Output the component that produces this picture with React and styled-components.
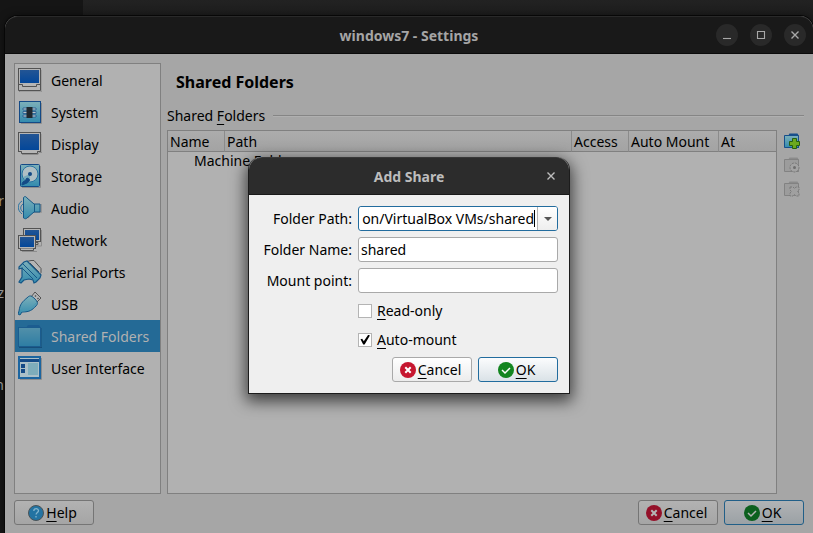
import React, { useEffect, useRef } from "react";
import styled, { createGlobalStyle, css } from "styled-components";

const GlobalStyle = createGlobalStyle`
  *, *::before, *::after { box-sizing: border-box; }
  body { margin: 0; background: #1f1f1f; }
  body, button, input { font: 14px/20px "Noto Sans", "Open Sans", sans-serif; color: #000; }
  button, input { margin: 0; padding: 0; }
`;

const Desktop = styled.div`
  position: relative;
  min-height: 100vh;
  display: flex;
  flex-direction: column;
  overflow: hidden;
  padding: 16px 0 0 5px;
  background: linear-gradient(#222 0, #1d1d1d 16px);
`;

const Terminal = styled.div`
  position: absolute;
  inset: 0 auto 0 0;
  width: 83px;
  background: #151515;
`;

const Glyph = styled.span`
  position: absolute;
  top: ${(p) => p.$top}px;
  left: 0;
  width: 4px;
  display: flex;
  justify-content: flex-end;
  overflow: hidden;
  color: ${(p) => p.$color};
`;

const Window = styled.main`
  position: relative;
  flex: 1;
  display: flex;
  flex-direction: column;
  border-radius: 13px 13px 0 0;
  background: #a6a6a6;
  box-shadow: 0 0 0 1px #070707, 0 0 8px #0008;
`;

const TitleBar = styled.header`
  display: grid;
  grid-template-columns: 1fr auto 1fr;
  align-items: center;
  height: 38px;
  padding: 0 7px;
  font-weight: 700;
  border-radius: 13px 13px 0 0;
  ${(p) =>
    p.$active
      ? css`background: #2c2c2c; color: #bdbdbd; border-bottom: 1px solid #191919; border-top: 1px solid #383838;`
      : css`background: #191919; color: #a5a5a5; border-bottom: 1px solid #0b0b0b; border-top: 1px solid #292929;`}
`;

const Title = styled.h1`
  grid-column: 2;
  margin: 0;
  padding-top: 2px;
  font: inherit;
`;

const WindowControls = styled.div`
  justify-self: end;
  display: flex;
  gap: 12px;
`;

const ControlButton = styled.button`
  display: grid;
  place-items: center;
  width: 22px;
  height: 22px;
  border: 0;
  border-radius: 50%;
  background: ${(p) => (p.$plain ? "transparent" : "#292929")};
  color: ${(p) => (p.$plain ? "#bdbdbd" : "#a8a8a8")};
`;

const Body = styled.div`
  flex: 1;
  display: grid;
  grid-template-columns: 147px minmax(0, 1fr);
  grid-template-rows: 1fr auto;
  gap: 6px;
  padding: 9px 9px 8px;
`;

const Categories = styled.nav`
  border: 1px solid #808080;
  background: #b1b1b1;
`;

const Category = styled.a`
  display: flex;
  align-items: center;
  gap: 9px;
  height: 32px;
  padding-left: 3px;
  white-space: nowrap;
  text-decoration: none;
  color: ${(p) => (p.$selected ? "#b1b1b1" : "#000")};
  background: ${(p) => (p.$selected ? "#246a96" : "transparent")};
`;

const CategoryName = styled.span`
  padding-top: 2px;
`;

const Page = styled.section`
  display: flex;
  flex-direction: column;
`;

const Heading = styled.h2`
  margin: 6px 0 0 9px;
  font-size: 16px;
  line-height: 26px;
`;

const GroupTitle = styled.div`
  display: flex;
  align-items: center;
  gap: 8px;
  margin: 11px 0 4px;

  &::after {
    content: "";
    flex: 1;
    height: 2px;
    background: #858585;
    border-bottom: 1px solid #b0b0b0;
  }
`;

const Content = styled.div`
  flex: 1;
  display: flex;
  gap: 7px;
`;

const TableFrame = styled.div`
  flex: 1;
  border: 1px solid #808080;
  background: #b1b1b1;
`;

const Table = styled.table`
  width: 100%;
  table-layout: fixed;
  border-collapse: separate;
  border-spacing: 0;
  white-space: nowrap;

  th {
    height: 21px;
    padding: 1px 0 0 2px;
    line-height: 19px;
    text-align: left;
    font-weight: 400;
    background: linear-gradient(#acacac, #a3a3a3);
    border-bottom: 1px solid #808080;
    border-right: 1px solid #8b8b8b;
  }
  th:last-child { border-right: 0; }
  td { height: 18px; padding: 0 0 0 26px; line-height: 18px; }
`;

const Col = styled.col`
  width: ${(p) => p.$width};
`;

const Tools = styled.div`
  display: flex;
  flex-direction: column;
  gap: 8px;
  width: 20px;
  padding-top: 3px;
`;

const ToolButton = styled.button`
  width: 16px;
  height: 16px;
  border: 0;
  background: none;
`;

const Footer = styled.footer`
  grid-column: 1 / -1;
  display: flex;
  gap: 6px;
`;

const Spacer = styled.span`
  flex: 1;
`;

const faces = {
  dim: css`border-color: #757575; background: linear-gradient(#b2b2b2, #a5a5a5);`,
  dimDefault: css`border-color: #215f88; background: linear-gradient(#b1b3b5, #9ba1a5);`,
  light: css`border-color: #a9a9a9; background: linear-gradient(#fff, #ececec);`,
  lightDefault: css`border-color: #226c9e; background: linear-gradient(#fbfcfd, #dae2e7);`,
};

const PushButton = styled.button`
  display: flex;
  align-items: center;
  justify-content: center;
  gap: 2px;
  width: 80px;
  height: 25px;
  padding-right: 3px;
  border: 1px solid;
  border-radius: 3px;
  ${(p) => faces[p.$face]}
`;

const Mnemonic = styled.span`
  text-decoration: underline;
  text-decoration-thickness: 1px;
  text-underline-offset: 3px;
  text-decoration-skip-ink: none;
`;

const Dialog = styled.section`
  position: absolute;
  top: 141px;
  left: 50%;
  transform: translateX(-50%);
  width: 322px;
  border: 1px solid #1c1c1c;
  border-top: 0;
  border-radius: 13px 13px 0 0;
  background: #efefef;
  box-shadow: 0 5px 16px 2px #000a;
`;

const Form = styled.form`
  display: grid;
  grid-template-columns: 1fr 200px;
  gap: 6px;
  padding: 11px;
`;

const FieldLabel = styled.label`
  line-height: 25px;
  text-align: right;
  white-space: nowrap;
`;

const TextBox = styled.input`
  width: 100%;
  height: 25px;
  padding: 0 2px;
  border: 1px solid #a9a9a9;
  border-radius: 3px;
  background: #fff;
  outline: 0;
`;

const Combo = styled.div`
  display: flex;
  align-items: center;
  height: 25px;
  overflow: hidden;
  border: 1px solid #226c9e;
  border-radius: 3px;
  background: #fff;
`;

const ComboInput = styled.input`
  flex: 1;
  min-width: 0;
  height: 23px;
  margin-left: 1px;
  border: 0;
  background: #fff;
  text-align: right;
  outline: 0;
`;

const Caret = styled.span`
  width: 1px;
  height: 17px;
  margin-right: 2px;
  background: #000;
`;

const ComboArrow = styled.button`
  display: grid;
  place-items: center;
  width: 20px;
  height: 23px;
  border: 0;
  border-left: 1px solid #b4b4b4;
  background: linear-gradient(#fff, #eee);
`;

const CheckRow = styled.label`
  grid-column: 2;
  display: flex;
  align-items: center;
  gap: 5px;
  height: 23px;
`;

const CheckBox = styled.input`
  appearance: none;
  display: grid;
  place-items: center;
  width: 14px;
  height: 14px;
  border: 1px solid #b4b4b4;
  background: #fff;

  &:checked::after {
    content: "";
    width: 10px;
    height: 10px;
    background: #000;
    clip-path: polygon(5% 48%, 22% 42%, 38% 67%, 82% 2%, 99% 10%, 46% 99%, 32% 99%);
  }
`;

const Actions = styled.div`
  grid-column: 1 / -1;
  display: flex;
  justify-content: flex-end;
  gap: 6px;
`;

const Svg = styled.svg`
  display: block;
  flex: none;
`;

const B = "#144a86";
const D = "#535353";
const T = "url(#teal)";

const Defs = () => (
  <Svg width="0" height="0" aria-hidden="true">
    <defs>
      <linearGradient id="teal" x1="0" y1="0" x2="0" y2="1">
        <stop offset="0" stopColor="#7db0b9" /><stop offset="1" stopColor="#338bae" />
      </linearGradient>
      <linearGradient id="screen" x1="0" y1="0" x2="0" y2="1">
        <stop offset="0" stopColor="#235594" /><stop offset="1" stopColor="#03479a" />
      </linearGradient>
    </defs>
  </Svg>
);

const Screen = ({ x, y, w, h }) => (
  <>
    <rect x={x + 0.5} y={y + 0.5} width={w - 1} height={h - 1} fill="#b5b5b5" stroke={D} />
    <rect x={x + 2} y={y + 2} width={w - 4} height={h - 4} fill="url(#screen)" />
  </>
);

const drawings = {
  general: (
    <>
      <path d="M1.5 17v7h22.500V2" fill="none" stroke="#888" />
      <path d="M.5 16.500h22v6H.500z" fill="#b5b5b5" stroke={D} />
      <Screen x={0} y={0} w={23} h={17} />
      <path d="M1 16h21v1h-3v2H5v-2H1z" fill="#b5b5b5" />
      <path d="M1 16.500h3.500v2h14v-2H22" fill="none" stroke={D} />
    </>
  ),
  system: (
    <>
      <path d="M3 23.500h20.500V3" fill="none" stroke="#8d8d8d" />
      <rect x="1.500" y="1.500" width="21" height="21" fill={T} stroke={B} />
      <path d="M5 8h13v2H5zm0 3.500h13v2H5zM5 15h13v2H5z" fill="#b8c7ca" stroke={B} strokeWidth=".7" />
      <rect x="8.500" y="7" width="6" height="11" fill="#20292f" />
    </>
  ),
  display: (
    <>
      <path d="M4 22.500h16l1-2h3V2" fill="none" stroke="#8d8d8d" />
      <Screen x={0} y={0} w={23} h={20} />
      <path d="M1 18.500h21v1h-2.500v2h-16v-2H1z" fill="#b5b5b5" />
      <path d="M.5 19.500h3v2h16v-2h3" fill="none" stroke={D} />
    </>
  ),
  storage: (
    <>
      <path d="M4 23.500h18.500V2" fill="none" stroke="#8d8d8d" />
      <rect x="2.500" y=".5" width="19" height="22" rx="1" fill={T} stroke={B} />
      <circle cx="12" cy="10" r="8" fill="#afbfc4" stroke="#2672a2" />
      <path d="M12 18a8 8 0 0 1-7-5l7-3z" fill="#75a9ba" />
      <circle cx="12" cy="10" r="2" fill={B} />
      <path d="M9 14l2 1c1 1 0 3-2 4l-5 2c0-2 1-4 3-4z" fill={B} stroke={B} />
    </>
  ),
  audio: (
    <>
      <path d="M10 22l3-6h10V8" fill="none" stroke="#8d8d8d" strokeWidth="1.500" />
      <path d="M5.500 1.500C7 0 8 .5 9 2l7 6h6v8h-6l-7 6c-1 1-2 1-3.500 0z" fill={T} stroke="#155787" />
      <path d="M16.500 8v8" stroke="#155787" />
      <path d="M4 5C-1 8-1 14 4 18M5 8c-3 2-3 6 0 8" fill="none" stroke="#2672a2" />
    </>
  ),
  network: (
    <>
      <path d="M17 18h6.500V2M4 23.500h15" fill="none" stroke="#8d8d8d" />
      <Screen x={5} y={0} w={18} h={14} />
      <path d="M15 14.500h5v2h-5z" fill="#b5b5b5" stroke={D} />
      <Screen x={0} y={7} w={18} h={14} />
      <path d="M2.500 20.500v2h13v-2" fill="#b5b5b5" stroke={D} />
    </>
  ),
  serial: (
    <>
      <path d="M9 1.500l4-1h3l7 8v4l-4 4z" fill="#b5b5b5" stroke={D} />
      <path d="M12 3l9 9" stroke={D} fill="none" />
      <path d="M4 8l-3 1v-2l5-5 3-1 14 14-1 3-4 4-2 1-1-3-4-1-5 1-3 3-2-1 3-5z" fill={T} stroke="#155787" strokeWidth="1.200" />
      <path d="M5 4l14 14M4 8l11 11" fill="none" stroke="#155787" />
    </>
  ),
  usb: (
    <>
      <path d="M13 5l4-5 6 6-5 5z" fill="#b5b5b5" stroke={D} />
      <path d="M17 3.500l1 1M19.500 6l1 1" stroke={D} strokeWidth="1.500" />
      <path d="M10 5c2-2 4-1 7 2s3 5 1 7c-4 4-6 6-14 6l-2 3-2-1 1-3c1-7 3-9 9-14z" fill={T} stroke="#155787" />
      <path d="M4 19c7 0 10-3 14-8" fill="none" stroke="#4c98b3" />
    </>
  ),
  folder: (
    <>
      <path d="M1 23.500h23V4" fill="none" stroke="#174e79" />
      <path d="M8 4l2-3h11l2 3v4H8z" fill="#1c5c90" />
      <rect x=".5" y="3.500" width="22" height="19" fill="url(#teal)" stroke="#1b5c8e" />
      <rect x="1" y="4" width="21" height="18" fill="#276f9a" opacity=".5" />
    </>
  ),
  ui: (
    <>
      <path d="M2 23.500h21.500V2" fill="none" stroke="#8d8d8d" />
      <rect x="1" y="1" width="21" height="21" fill="#abc0c7" stroke="#1c65a0" strokeWidth="2" />
      <path d="M2 3h19v3H2z" fill={B} />
      <path d="M3 8h4v4H3zM3 13h4v4H3z" fill={B} />
      <path d="M10 7h10v12H10z" fill="#7eadbb" />
    </>
  ),
};

const CategoryIcon = ({ name }) => (
  <Svg width="24" height="24" viewBox="0 0 24 24" aria-hidden="true">{drawings[name]}</Svg>
);

const FolderTool = ({ kind }) => {
  const add = kind === "add";
  const ink = add ? "#174f8b" : "#828282";
  return (
    <Svg width="16" height="16" viewBox="0 0 16 16" aria-hidden="true">
      <path d="M4 3l1.500-2.500h8L15 3v12H4z" fill={add ? "#174f8b" : "#8b8b8b"} />
      <path d="M.5 2.500h14v12H.500z" fill={add ? T : "#9c9c9c"} stroke={ink} />
      {kind === "add" && <path d="M8.500 5.500h4v3h3v4h-3v3h-4v-3h-3v-4h3z" fill="#6ca920" stroke="#275f10" />}
      {kind === "edit" && (
        <>
          <circle cx="10.500" cy="10.500" r="4.500" fill="#a3a3a3" stroke="#787878" strokeDasharray="2 1" />
          <circle cx="10.500" cy="10.500" r="1.500" fill="#6e6e6e" />
        </>
      )}
      {kind === "remove" && (
        <path d="M6 6h3l1.500 1.500L12 6h3v3l-1.500 1.500L15 12v3h-3l-1.500-1.500L9 15H6v-3l1.500-1.500L6 9z" fill="#a0a0a0" stroke="#797979" strokeDasharray="2 1" />
      )}
    </Svg>
  );
};

const ButtonIcon = ({ kind, dim }) => (
  <Svg width="16" height="16" viewBox="0 0 16 16" aria-hidden="true">
    {kind === "cancel" && (
      <>
        <circle cx="8" cy="8" r="8" fill={dim ? "#94112a" : "#c6162f"} />
        <path d="M5.300 5.300l5.400 5.400M10.700 5.300l-5.400 5.400" stroke={dim ? "#b5b5b5" : "#fff"} strokeWidth="2" />
      </>
    )}
    {kind === "ok" && (
      <>
        <circle cx="8" cy="8" r="8" fill={dim ? "#0c601e" : "#12851f"} />
        <path d="M4 8l3 3 5-5" fill="none" stroke={dim ? "#b5b5b5" : "#fff"} strokeWidth="1.500" />
      </>
    )}
    {kind === "help" && (
      <>
        <circle cx="8" cy="8" r="7.500" fill="#2373a2" stroke="#4a5357" />
        <path d="M5.800 6c0-3 4.700-3 4.700-.3 0 1.800-2.400 1.800-2.400 3.800M8 11v1.500" fill="none" stroke="#83b4cd" strokeWidth="1.300" />
      </>
    )}
  </Svg>
);

const Action = ({ kind, face, children, ...rest }) => (
  <PushButton type="button" $face={face} {...rest}>
    <ButtonIcon kind={kind} dim={face.startsWith("dim")} />
    <span><Mnemonic>{children[0]}</Mnemonic>{children.slice(1)}</span>
  </PushButton>
);

const controlPaths = {
  Minimize: "M0 7.500h8",
  Maximize: "M.5.500h7v7h-7z",
  Close: "M.5.500l7 7M7.500.500l-7 7",
};

const Control = ({ label, plain }) => (
  <ControlButton type="button" aria-label={label} $plain={plain}>
    <Svg width="8" height="8" viewBox="0 0 8 8" overflow="visible" aria-hidden="true">
      <path d={controlPaths[label]} fill="none" stroke="currentColor" strokeWidth={label === "Close" ? 1.4 : 1.1} />
    </Svg>
  </ControlButton>
);

const categories = [
  ["general", "General"], ["system", "System"], ["display", "Display"],
  ["storage", "Storage"], ["audio", "Audio"], ["network", "Network"],
  ["serial", "Serial Ports"], ["usb", "USB"], ["folder", "Shared Folders"],
  ["ui", "User Interface"],
];

function AddShare() {
  const pathRef = useRef(null);
  useEffect(() => {
    pathRef.current.scrollLeft = pathRef.current.scrollWidth;
  }, []);

  return (
    <Dialog role="dialog" aria-labelledby="add-share">
      <TitleBar $active>
        <Title as="h2" id="add-share">Add Share</Title>
        <WindowControls><Control label="Close" plain /></WindowControls>
      </TitleBar>
      <Form>
        <FieldLabel htmlFor="path">Folder Path:</FieldLabel>
        <Combo>
          <ComboInput id="path" ref={pathRef} defaultValue="on/VirtualBox VMs/shared" />
          <Caret />
          <ComboArrow type="button" aria-label="Choose path">
            <Svg width="8" height="4" viewBox="0 0 8 4" aria-hidden="true"><path d="M0 0h8L4 4z" fill="#555" /></Svg>
          </ComboArrow>
        </Combo>
        <FieldLabel htmlFor="name">Folder Name:</FieldLabel>
        <TextBox id="name" defaultValue="shared" />
        <FieldLabel htmlFor="mount">Mount point:</FieldLabel>
        <TextBox id="mount" />
        <CheckRow><CheckBox type="checkbox" /><span><Mnemonic>R</Mnemonic>ead-only</span></CheckRow>
        <CheckRow><CheckBox type="checkbox" defaultChecked /><span><Mnemonic>A</Mnemonic>uto-mount</span></CheckRow>
        <Actions>
          <Action kind="cancel" face="light">Cancel</Action>
          <Action kind="ok" face="lightDefault">OK</Action>
        </Actions>
      </Form>
    </Dialog>
  );
}

export default function App() {
  return (
    <Desktop>
      <GlobalStyle />
      <Terminal aria-hidden="true">
        <Glyph $top={191} $color="#a99d82">r</Glyph>
        <Glyph $top={283} $color="#a5a5a5">z</Glyph>
        <Glyph $top={375} $color="#a5a5a5">n</Glyph>
      </Terminal>
      <Window>
        <Defs />
        <TitleBar>
          <Title>windows7 - Settings</Title>
          <WindowControls>
            <Control label="Minimize" /><Control label="Maximize" /><Control label="Close" />
          </WindowControls>
        </TitleBar>
        <Body>
          <Categories aria-label="Settings">
            {categories.map(([icon, label]) => (
              <Category key={icon} href={`#${icon}`} $selected={icon === "folder"}>
                <CategoryIcon name={icon} />
                <CategoryName>{label}</CategoryName>
              </Category>
            ))}
          </Categories>
          <Page>
            <Heading>Shared Folders</Heading>
            <GroupTitle><span>Shared <Mnemonic>F</Mnemonic>olders</span></GroupTitle>
            <Content>
              <TableFrame>
                <Table>
                  <colgroup>
                    <Col $width="57px" /><Col $width="auto" /><Col $width="57px" /><Col $width="90px" /><Col $width="57px" />
                  </colgroup>
                  <thead>
                    <tr><th>Name</th><th>Path</th><th>Access</th><th>Auto Mount</th><th>At</th></tr>
                  </thead>
                  <tbody>
                    <tr><td colSpan="5">Machine Folders</td></tr>
                  </tbody>
                </Table>
              </TableFrame>
              <Tools>
                <ToolButton type="button" aria-label="Add share"><FolderTool kind="add" /></ToolButton>
                <ToolButton type="button" aria-label="Edit share" disabled><FolderTool kind="edit" /></ToolButton>
                <ToolButton type="button" aria-label="Remove share" disabled><FolderTool kind="remove" /></ToolButton>
              </Tools>
            </Content>
          </Page>
          <Footer>
            <Action kind="help" face="dim">Help</Action>
            <Spacer />
            <Action kind="cancel" face="dim">Cancel</Action>
            <Action kind="ok" face="dimDefault">OK</Action>
          </Footer>
        </Body>
        <AddShare />
      </Window>
    </Desktop>
  );
}
